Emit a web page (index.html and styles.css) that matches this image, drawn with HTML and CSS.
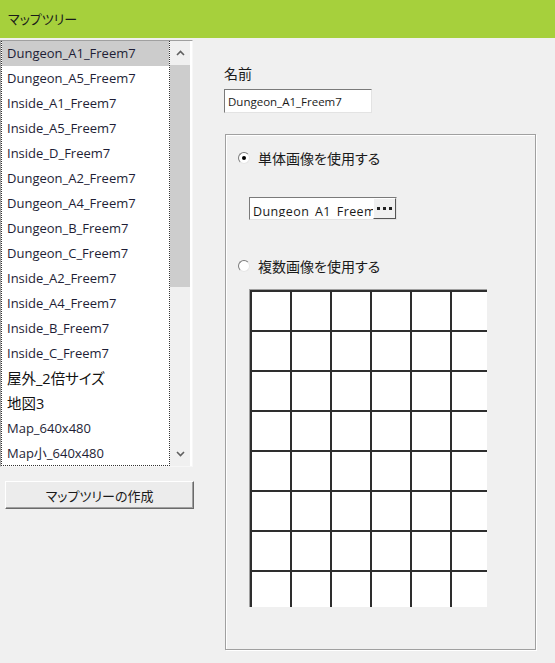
FILE: index.html
```html
<!DOCTYPE html>
<html lang="ja">
<head>
    <meta charset="UTF-8">
    <title>マップツリー</title>
    <link rel="stylesheet" href="styles.css">
</head>
<body>
    <header class="titlebar">マップツリー</header>

    <div class="main">
        <div class="side">
            <div class="maplist">
                <ul class="items">
                    <li class="selected">Dungeon_A1_Freem7</li>
                    <li>Dungeon_A5_Freem7</li>
                    <li>Inside_A1_Freem7</li>
                    <li>Inside_A5_Freem7</li>
                    <li>Inside_D_Freem7</li>
                    <li>Dungeon_A2_Freem7</li>
                    <li>Dungeon_A4_Freem7</li>
                    <li>Dungeon_B_Freem7</li>
                    <li>Dungeon_C_Freem7</li>
                    <li>Inside_A2_Freem7</li>
                    <li>Inside_A4_Freem7</li>
                    <li>Inside_B_Freem7</li>
                    <li>Inside_C_Freem7</li>
                    <li class="ja">屋外_2倍サイズ</li>
                    <li class="ja">地図3</li>
                    <li>Map_640x480</li>
                    <li>Map小_640x480</li>
                </ul>
                <div class="scrollbar">
                    <div class="scroll-btn">
                        <svg width="9" height="6" viewBox="0 0 9 6"><path d="M1 5 L4.5 1.5 L8 5" fill="none" stroke="#606060" stroke-width="1.6"/></svg>
                    </div>
                    <div class="thumb"></div>
                    <div class="track"></div>
                    <div class="scroll-btn">
                        <svg width="9" height="6" viewBox="0 0 9 6"><path d="M1 1 L4.5 4.5 L8 1" fill="none" stroke="#606060" stroke-width="1.6"/></svg>
                    </div>
                </div>
            </div>
            <button type="button" class="create">マップツリーの作成</button>
        </div>

        <div class="props">
            <label class="name-label">名前</label>
            <input type="text" class="name-field" value="Dungeon_A1_Freem7">

            <div class="image-group">
                <div class="radio-row">
                    <span class="radio checked"></span>
                    <span>単体画像を使用する</span>
                </div>
                <div class="file-field">
                    <span class="file-name">Dungeon_A1_Freem</span>
                    <span class="browse">
                        <svg width="15" height="3" viewBox="0 0 15 3"><rect x="0" y="0" width="3" height="3" fill="#222"/><rect x="6" y="0" width="3" height="3" fill="#222"/><rect x="12" y="0" width="3" height="3" fill="#222"/></svg>
                    </span>
                </div>
                <div class="radio-row multi">
                    <span class="radio"></span>
                    <span>複数画像を使用する</span>
                </div>
                <div class="tile-grid"></div>
            </div>
        </div>
    </div>
</body>
</html>
```

FILE: styles.css
```css
body {
    margin: 0;
    width: 555px;
    height: 663px;
    overflow: hidden;
    background-color: #f0f0f0;
    font-family: "Open Sans", "Noto Sans CJK JP", sans-serif;
    font-feature-settings: "palt";
    color: #1a1a1a;
}

.titlebar {
    height: 38px;
    line-height: 38px;
    padding-left: 8px;
    background-color: #a6d03c;
    font-size: 13px;
}

.main {
    display: flex;
    margin-top: 2px;
}

/* left column: map list + create button */
.side {
    width: 193px;
    flex: none;
}

.maplist {
    display: flex;
    width: 193px;
    height: 427px;
    box-sizing: border-box;
    border: 1px solid;
    border-color: #a0a0a0 #f7f7f7 #f7f7f7 #a0a0a0;
    background-color: #fff;
}

.items {
    list-style: none;
    margin: 0;
    padding: 0;
    width: 169px;
    flex: none;
    overflow: hidden;
    box-sizing: border-box;
    border: 1px dotted #333;
    border-top: none;
}

.items li {
    height: 25px;
    line-height: 25px;
    padding-left: 5px;
    font-size: 13px;
    color: #1e1e36;
    white-space: nowrap;
}

.items li.ja {
    font-size: 14.5px;
    color: #111;
}

.items li.selected {
    margin: 0 -1px;
    padding-left: 6px;
    background-color: #cccccc;
}

.scrollbar {
    width: 20px;
    display: flex;
    flex-direction: column;
    background-color: #f0f0f0;
}

.scroll-btn {
    height: 24px;
    display: flex;
    align-items: center;
    justify-content: center;
}

.thumb {
    height: 222px;
    background-color: #cdcdcd;
}

.track {
    flex: 1;
}

.create {
    display: block;
    margin: 14px 0 0 5px;
    width: 189px;
    height: 28px;
    padding: 0;
    font: inherit;
    font-size: 13px;
    color: #1a1a1a;
    background-color: #ececec;
    border: 1px solid;
    border-color: #fff #6a6a6a #6a6a6a #fff;
    box-shadow: inset -1px -1px 0 #a0a0a0;
}

/* right column */
.props {
    padding: 24px 0 0 31px;
}

.name-label {
    display: block;
    font-size: 14px;
    line-height: 20px;
}

.name-field {
    display: block;
    margin-top: 5px;
    width: 148px;
    height: 24px;
    box-sizing: border-box;
    padding: 0 3px;
    font: inherit;
    font-size: 11.5px;
    color: #1a1a1a;
    background-color: #fff;
    border: 1px solid;
    border-color: #7a7a7a #e3e3e3 #e3e3e3 #7a7a7a;
    outline: none;
}

.image-group {
    margin: 21px 0 0 1px;
    width: 311px;
    height: 516px;
    box-sizing: border-box;
    padding: 13px 0 0 12px;
    border: 1px solid #a0a0a0;
    box-shadow: 1px 1px 0 #fff, inset 1px 1px 0 #fff;
}

.radio-row {
    display: flex;
    align-items: center;
    gap: 8px;
    height: 20px;
    font-size: 14px;
}

.radio-row.multi {
    margin-top: 36px;
}

.radio {
    position: relative;
    width: 12px;
    height: 12px;
    box-sizing: border-box;
    border-radius: 50%;
    background-color: #fff;
    border: 1px solid;
    border-color: #7a7a7a #e6e6e6 #e6e6e6 #7a7a7a;
}

.radio.checked::after {
    content: "";
    position: absolute;
    left: 3px;
    top: 3px;
    width: 4px;
    height: 4px;
    border-radius: 50%;
    background-color: #000;
}

.file-field {
    display: flex;
    margin: 29px 0 0 11px;
    width: 148px;
    height: 23px;
    box-sizing: border-box;
    background-color: #fff;
    border: 1px solid;
    border-color: #7a7a7a #e3e3e3 #e3e3e3 #7a7a7a;
}

/* the name sits low in the box, so its underscores fall below the clip */
.file-name {
    flex: 1;
    overflow: hidden;
    white-space: nowrap;
    box-sizing: border-box;
    height: 19px;
    padding: 4px 0 0 3px;
    line-height: 19px;
    font-size: 12.5px;
    letter-spacing: 0.4px;
    color: #1a1a1a;
}

.browse {
    width: 21px;
    flex: none;
    display: flex;
    align-items: center;
    justify-content: center;
    background-color: #f0f0f0;
    border: 1px solid;
    border-color: #fff #555 #555 #fff;
}

.tile-grid {
    margin: 13px 0 0 11px;
    width: 238px;
    height: 318px;
    box-sizing: border-box;
    border-top: 1px solid #a0a0a0;
    border-left: 1px solid #a0a0a0;
    background-color: #fff;
    background-image:
        linear-gradient(to right, #2e2e2e 2px, transparent 2px),
        linear-gradient(to bottom, #2e2e2e 2px, transparent 2px);
    background-size: 40px 40px;
}
```
